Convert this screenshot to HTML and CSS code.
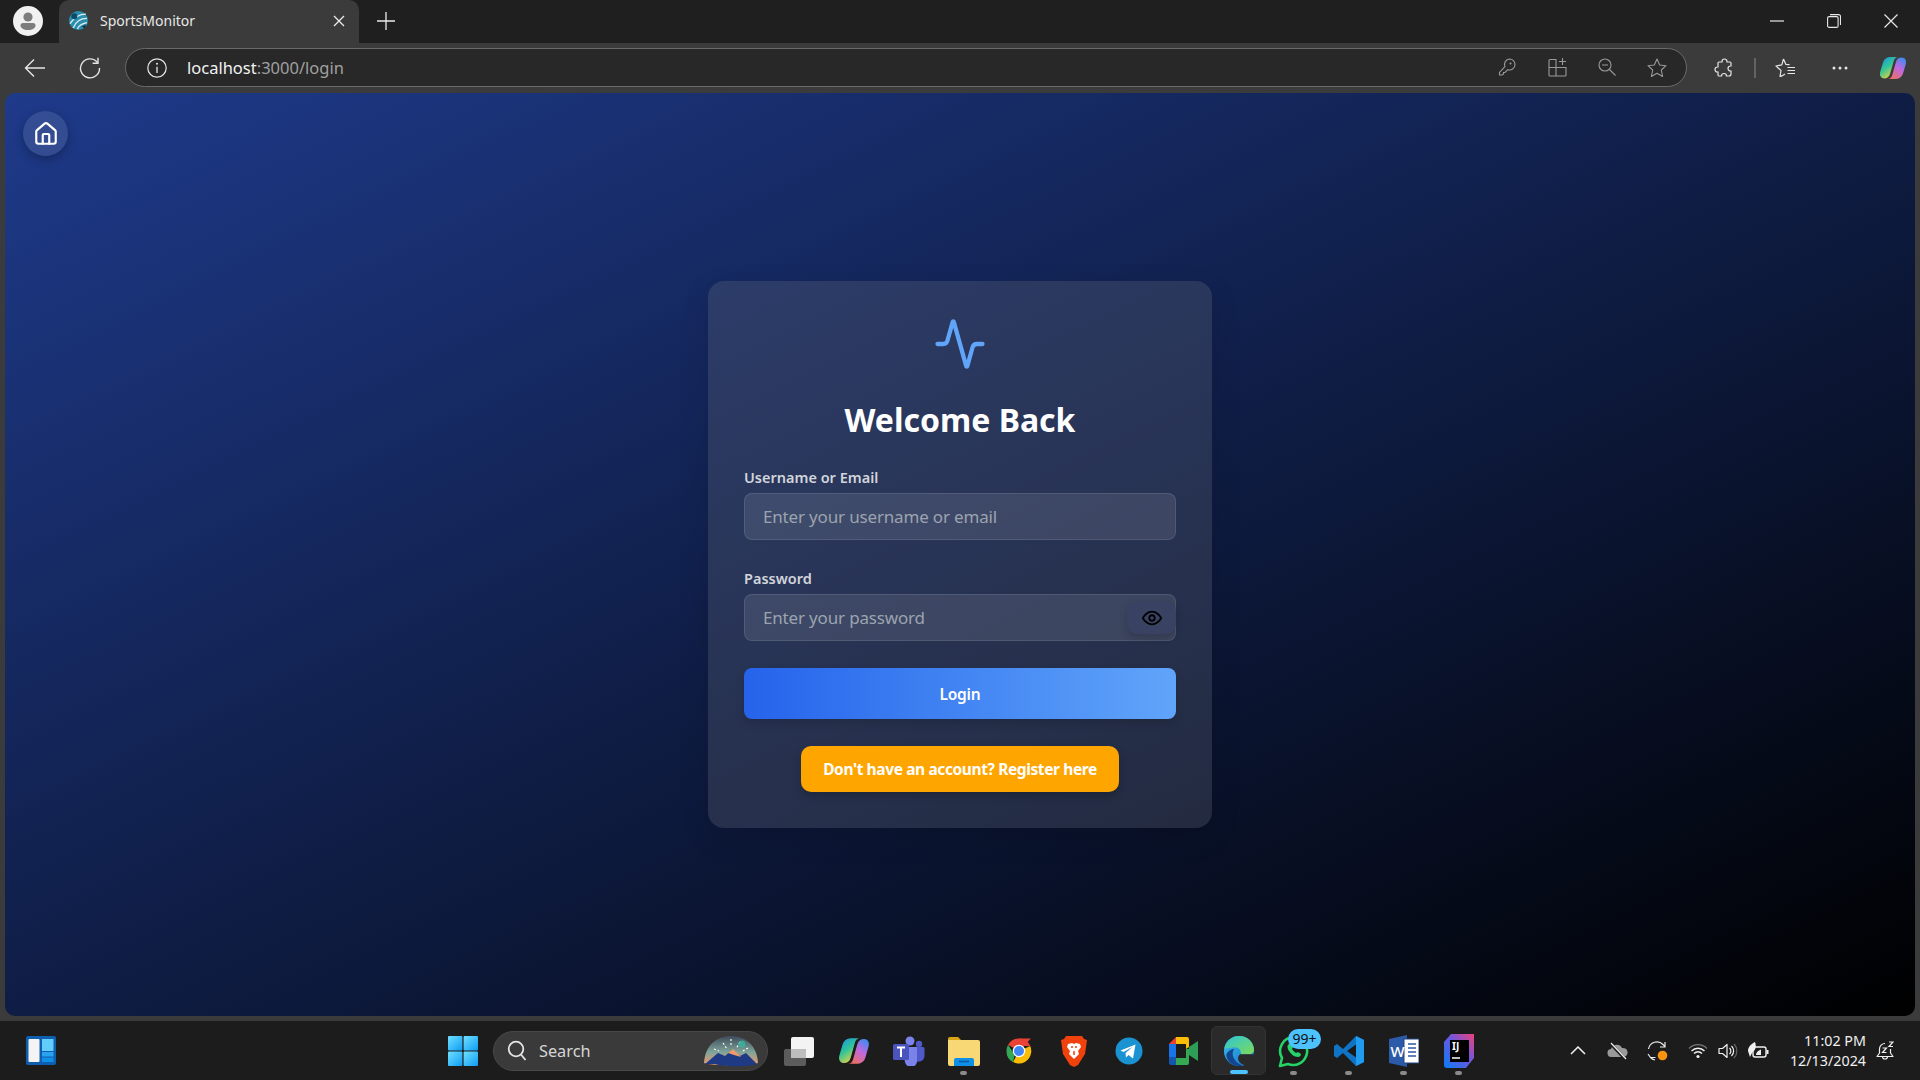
FILE: index.html
```html
<!DOCTYPE html>
<html lang="en">
<head>
	<meta charset="UTF-8">
	<title>SportsMonitor</title>
	<link rel="stylesheet" href="styles.css">
</head>
<body>
	<svg class="defs" width="0" height="0">
		<defs>
			<linearGradient id="cpA" x1="0" y1="0" x2="0.6" y2="1">
				<stop offset="0" stop-color="#1b8ee8"/><stop offset="0.5" stop-color="#2fc59a"/><stop offset="1" stop-color="#f2d23c"/>
			</linearGradient>
			<linearGradient id="cpB" x1="0.8" y1="0" x2="0.2" y2="1">
				<stop offset="0" stop-color="#3d8bf0"/><stop offset="0.45" stop-color="#c168e0"/><stop offset="1" stop-color="#f0705a"/>
			</linearGradient>
			<linearGradient id="winG" x1="0" y1="0" x2="1" y2="1">
				<stop offset="0" stop-color="#6fe0ff"/><stop offset="1" stop-color="#0f9cf5"/>
			</linearGradient>
			<linearGradient id="edgeG" x1="0" y1="0" x2="1" y2="1">
				<stop offset="0" stop-color="#35c1f1"/><stop offset="1" stop-color="#1b6fc4"/>
			</linearGradient>
			<linearGradient id="edgeT" x1="0" y1="0" x2="1" y2="1">
				<stop offset="0" stop-color="#2cc7d8"/><stop offset="1" stop-color="#7ed957"/>
			</linearGradient>
			<linearGradient id="ijG" x1="0" y1="1" x2="1" y2="0">
				<stop offset="0" stop-color="#0a7cf5"/><stop offset="0.55" stop-color="#6b57e0"/><stop offset="1" stop-color="#f0417a"/>
			</linearGradient>
			<linearGradient id="fireG" x1="0" y1="0" x2="0" y2="1">
				<stop offset="0" stop-color="#3d4a5a"/><stop offset="0.55" stop-color="#7fa49a"/><stop offset="1" stop-color="#ef9a6a"/>
			</linearGradient>
			<symbol id="copilot" viewBox="0 0 24 24">
				<path d="M10 2.500h6.500c-2 0-3.200 1.200-3.800 3.200L9.500 17c-.8 2.800-2.500 4-5 4-2.800 0-4.300-2.500-3.500-5.500L3.500 7C4.500 4 7 2.500 10 2.500z" fill="url(#cpA)"/>
				<path d="M14 21.500H7.500c2 0 3.200-1.200 3.800-3.200L14.500 7c.8-2.800 2.500-4 5-4 2.800 0 4.300 2.500 3.500 5.500L20.500 17c-1 3-3.500 4.500-6.500 4.500z" fill="url(#cpB)"/>
			</symbol>
		</defs>
	</svg>

	<div class="tabbar">
		<div class="profile">
			<svg width="30" height="30" viewBox="0 0 30 30"><circle cx="15" cy="15" r="15" fill="#f1f1f1"/><circle cx="15" cy="11" r="4.600" fill="#7d7d7d"/><path d="M7.500 19.500a2.500 2.500 0 0 1 2.500-2.500h10a2.500 2.500 0 0 1 2.500 2.500c0 2.600-3 4.500-7.500 4.500s-7.500-1.900-7.500-4.500z" fill="#7d7d7d"/></svg>
		</div>
		<div class="tab">
			<svg class="favicon" width="19" height="19" viewBox="0 0 18 18"><circle cx="9" cy="9" r="9" fill="#2a8fae"/><path d="M1 12C5 6 10 3 16 3M4 16c2-5 6-9 13-9M8 17c1-3 4-5 9-6" stroke="#dfeef2" stroke-width="1.300" fill="none"/><circle cx="5" cy="5" r="2.800" fill="#0c4a66"/><path d="M12 15l4-2-1 3z" fill="#123"/></svg>
			<span class="tab-title">SportsMonitor</span>
			<svg class="tab-close" width="12" height="12" viewBox="0 0 12 12"><path d="M1 1l10 10M11 1L1 11" stroke="#ececec" stroke-width="1.300"/></svg>
		</div>
		<svg class="newtab" width="18" height="18" viewBox="0 0 18 18"><path d="M9 0v18M0 9h18" stroke="#ececec" stroke-width="1.300"/></svg>
		<div class="winctl">
			<span class="winbtn"><svg width="14" height="14" viewBox="0 0 14 14"><path d="M0 7h14" stroke="#e8e8e8" stroke-width="1.200"/></svg></span>
			<span class="winbtn"><svg width="14" height="14" viewBox="0 0 14 14"><rect x="0.600" y="2.600" width="10.500" height="10.800" rx="1.500" fill="none" stroke="#e8e8e8" stroke-width="1.100"/><path d="M3 .6h8.500a2 2 0 0 1 2 2V11" fill="none" stroke="#e8e8e8" stroke-width="1.100"/></svg></span>
			<span class="winbtn"><svg width="14" height="14" viewBox="0 0 14 14"><path d="M.5.5l13 13M13.500.5l-13 13" stroke="#e8e8e8" stroke-width="1.200"/></svg></span>
		</div>
	</div>

	<div class="toolbar">
		<span class="navbtn">
			<svg width="22" height="20" viewBox="0 0 22 20"><path d="M21 10H1.500M10 1.500L1.500 10l8.500 8.500" fill="none" stroke="#e6e6e6" stroke-width="1.400"/></svg>
		</span>
		<span class="navbtn reload">
			<svg width="22" height="22" viewBox="0 0 22 22"><path d="M18.500 5.500A9.500 9.500 0 1 0 20.500 11" fill="none" stroke="#e6e6e6" stroke-width="1.400"/><path d="M19 .8v5.400h-5.400" fill="none" stroke="#e6e6e6" stroke-width="1.400"/></svg>
		</span>
		<div class="address">
			<svg class="info" width="20" height="20" viewBox="0 0 20 20"><circle cx="10" cy="10" r="9.200" fill="none" stroke="#e6e6e6" stroke-width="1.200"/><path d="M10 8.800V15" stroke="#e6e6e6" stroke-width="1.300"/><circle cx="10" cy="5.800" r="1" fill="#e6e6e6"/></svg>
			<span class="url"><span class="url-host">localhost</span>:3000/login</span>
			<div class="addr-icons">
				<span class="addr-icon"><svg width="18" height="18" viewBox="0 0 18 18"><path d="M11.500 1a5.500 5.500 0 0 1 5.500 5.500 5.500 5.500 0 0 1-7.300 5.200L7 14.500H5.500V16L4 17H1.500v-2.500l5.400-5.900A5.500 5.500 0 0 1 11.500 1z" fill="none" stroke="#9a9a9a" stroke-width="1.100"/><circle cx="12.500" cy="5.500" r="1" fill="#9a9a9a"/></svg></span>
				<span class="addr-icon"><svg width="19" height="19" viewBox="0 0 19 19"><path d="M8 1.500H2a1 1 0 0 0-1 1V9.500h7zM1 9.500V17a1 1 0 0 0 1 1h6V9.500zM8 18h9a1 1 0 0 0 1-1V9.500H8zM14.500 0v7M11 3.500h7" fill="none" stroke="#9a9a9a" stroke-width="1.100"/></svg></span>
				<span class="addr-icon"><svg width="18" height="18" viewBox="0 0 18 18"><circle cx="7" cy="7" r="6" fill="none" stroke="#9a9a9a" stroke-width="1.100"/><path d="M4 7h6M11.500 11.500l6 6" stroke="#9a9a9a" stroke-width="1.100"/></svg></span>
				<span class="addr-icon"><svg width="20" height="20" viewBox="0 0 20 20"><path d="M10 1l2.700 6 6.300.7-4.700 4.300 1.300 6.500L10 15.200l-5.600 3.300L5.700 12 1 7.700 7.300 7z" fill="none" stroke="#9a9a9a" stroke-width="1.100" stroke-linejoin="round"/></svg></span>
			</div>
		</div>
		<span class="tool puzzle"><svg width="20" height="20" viewBox="0 0 20 20"><path d="M8 3.500a2.500 2.500 0 0 1 5 0V4h3a1 1 0 0 1 1 1v3h-.5a2.500 2.500 0 0 0 0 5h.5v3a2 2 0 0 1-2 2h-2.500a2.500 2.500 0 0 0-5 0H5a1 1 0 0 1-1-1v-3h-.5a2.500 2.500 0 0 1 0-5H4V5a1 1 0 0 1 1-1h3z" fill="none" stroke="#e6e6e6" stroke-width="1.200"/></svg></span>
		<span class="divider"></span>
		<span class="tool fav"><svg width="20" height="20" viewBox="0 0 20 20"><path d="M8.500 1l2.300 5.300 3.700.4M6.500 17.500l-1.500 1L6 12.500 1 8l5.800-1.200L8.500 1M6 18.500l4-2.500" fill="none" stroke="#e6e6e6" stroke-width="1.200" stroke-linejoin="round"/><path d="M12.500 9.500H20M12.500 12.500H20M12.500 15.500H20" stroke="#e6e6e6" stroke-width="1.200"/></svg></span>
		<span class="tool more"><svg width="16" height="4" viewBox="0 0 16 4"><circle cx="2" cy="2" r="1.500" fill="#e6e6e6"/><circle cx="8" cy="2" r="1.500" fill="#e6e6e6"/><circle cx="14" cy="2" r="1.500" fill="#e6e6e6"/></svg></span>
		<span class="tool cop"><svg width="28" height="28"><use href="#copilot"/></svg></span>
	</div>

	<div class="viewport">
		<main class="page">
			<a class="home-btn" href="#home">
				<svg width="26" height="26" viewBox="0 0 24 24" fill="none" stroke="#fff" stroke-width="2" stroke-linecap="round" stroke-linejoin="round"><path d="M15 21v-8a1 1 0 0 0-1-1h-4a1 1 0 0 0-1 1v8"/><path d="M3 10a2 2 0 0 1 .709-1.528l7-5.999a2 2 0 0 1 2.582 0l7 5.999A2 2 0 0 1 21 10v9a2 2 0 0 1-2 2H5a2 2 0 0 1-2-2z"/></svg>
			</a>
			<form class="card">
				<svg class="logo" width="54" height="54" viewBox="0 0 24 24" fill="none" stroke="#60a5fa" stroke-width="1.900" stroke-linecap="round" stroke-linejoin="round"><path d="M22 12h-2.480a2 2 0 0 0-1.930 1.460l-2.350 8.360a.25.25 0 0 1-.48 0L9.240 2.180a.25.25 0 0 0-.48 0l-2.350 8.360A2 2 0 0 1 4.490 12H2"/></svg>
				<h1 class="title">Welcome Back</h1>
				<div class="field">
					<label class="label">Username or Email</label>
					<input class="input" type="text" placeholder="Enter your username or email">
				</div>
				<div class="field field-last">
					<label class="label">Password</label>
					<div class="pass-wrap">
						<input class="input" type="password" placeholder="Enter your password">
						<span class="eye">
							<svg width="22" height="22" viewBox="0 0 24 24" fill="none" stroke="#000" stroke-width="2" stroke-linecap="round" stroke-linejoin="round"><path d="M2 12s3.500-7 10-7 10 7 10 7-3.500 7-10 7-10-7-10-7z"/><circle cx="12" cy="12" r="3"/></svg>
						</span>
					</div>
				</div>
				<button class="login" type="button">Login</button>
				<button class="register" type="button">Don't have an account? Register here</button>
			</form>
		</main>
	</div>

	<div class="taskbar">
		<div class="tb-left">
			<svg width="30" height="30" viewBox="0 0 30 30"><rect width="30" height="29" rx="2" fill="#0f5fb0"/><rect x="2.500" y="3" width="11" height="23" rx="1" fill="#f4f4f4"/><rect x="16" y="3" width="11.500" height="12" fill="#62cdfb"/><rect x="16" y="16" width="11.500" height="4.500" fill="#2aa3ee"/><rect x="16" y="21.500" width="11.500" height="4.500" fill="#0f8fe6"/></svg>
		</div>
		<div class="tb-item">
			<svg width="30" height="30" viewBox="0 0 30 30"><rect x="0" y="0" width="14.400" height="14.400" rx="1" fill="url(#winG)"/><rect x="15.600" y="0" width="14.400" height="14.400" rx="1" fill="url(#winG)"/><rect x="0" y="15.600" width="14.400" height="14.400" rx="1" fill="url(#winG)"/><rect x="15.600" y="15.600" width="14.400" height="14.400" rx="1" fill="url(#winG)"/></svg>
		</div>
		<div class="search">
			<svg width="20" height="22" viewBox="0 0 20 22"><circle cx="9" cy="9" r="7.300" fill="none" stroke="#e4e4e4" stroke-width="1.800"/><path d="M14 14.500l4.500 5.500" stroke="#e4e4e4" stroke-width="1.800"/></svg>
			<span class="search-text">Search</span>
			<svg class="search-art" width="56" height="32" viewBox="0 0 56 32"><path d="M1 28C2 10 14 1 28 1s26 9 27 27c-6 3-48 3-54 0z" fill="url(#fireG)"/><path d="M2 29l13-11 7 3 7-6 8 6 6-3 11 11c-8 3-34 3-42 0z" fill="#1f3a85"/><path d="M25 18l5-4 8 8-7-2z" fill="#ef9a6a"/><path d="M28 4v8M20 8l4 6M37 7l-4 7M11 14l5 2M45 13l-5 3" stroke="#fff" stroke-width="1.200" stroke-dasharray="2 2"/><circle cx="39" cy="9" r="3.500" fill="#35b8a0" opacity="0.800"/></svg>
		</div>
		<div class="tb-item">
			<svg width="32" height="30" viewBox="0 0 32 30"><rect x="1" y="13" width="22" height="17" rx="2" fill="#5c5c5c"/><rect x="8" y="1" width="23" height="21" rx="2" fill="#f3f3f3"/><rect x="8" y="13" width="15" height="9" fill="#bdbdbd"/></svg>
		</div>
		<div class="tb-item"><svg width="32" height="32"><use href="#copilot"/></svg></div>
		<div class="tb-item">
			<svg width="32" height="30" viewBox="0 0 32 30"><circle cx="17" cy="5" r="4.500" fill="#7b83eb"/><circle cx="26" cy="8" r="3.200" fill="#5059c9"/><path d="M20 11h10a1.500 1.500 0 0 1 1.500 1.500V20a6 6 0 0 1-9 5z" fill="#5059c9"/><path d="M9 11h15v13a6 6 0 0 1-12 2z" fill="#7b83eb"/><rect x="0" y="8" width="16" height="16" rx="1.500" fill="#4b53bc"/><path d="M4 11.500h8M8 11.500V21" stroke="#fff" stroke-width="2"/></svg>
		</div>
		<div class="tb-item has-dot">
			<svg width="32" height="30" viewBox="0 0 32 30"><path d="M0 3a2 2 0 0 1 2-2h8l3 3h-13z" fill="#d9a514"/><path d="M0 4h13l3 0h14a2 2 0 0 1 2 2v22a2 2 0 0 1-2 2H2a2 2 0 0 1-2-2z" fill="#f8d775"/><path d="M6 30v-6a2 2 0 0 1 2-2h16a2 2 0 0 1 2 2v6z" fill="#0f8fe6"/><path d="M11 25.500h10" stroke="#0a5ba8" stroke-width="1.600"/></svg>
		</div>
		<div class="tb-item">
			<svg width="30" height="30" viewBox="0 0 48 48"><path d="M24 24L6.500 14A20 20 0 0 1 24 4h18a20 20 0 0 1 1 0z" fill="#ea4335"/><path d="M4 24A20 20 0 0 1 6.500 14L17 30l-2.500 12A20 20 0 0 1 4 24z" fill="#34a853"/><path d="M24 44a20 20 0 0 1-9.500-2.300L24 24l18-8a20 20 0 0 1-18 28z" fill="#fbbc05"/><path d="M24 4a20 20 0 0 1 18 12H24z" fill="#ea4335"/><circle cx="24" cy="24" r="10" fill="#fff"/><circle cx="24" cy="24" r="8" fill="#4285f4"/></svg>
		</div>
		<div class="tb-item">
			<svg width="26" height="32" viewBox="0 0 26 32"><path d="M5 1h16l2 3 3 1-2 14-7 11-4 2-4-2L2 19 0 5l3-1z" fill="#f1420e"/><path d="M7 9l4-1 2 1 2-1 4 1 1 3-3 4 1 3-5 5-5-5 1-3-3-4z" fill="#fff"/><path d="M10 12h2M14 12h2M13 16v4" stroke="#f1420e" stroke-width="1.500"/></svg>
		</div>
		<div class="tb-item">
			<svg width="28" height="28" viewBox="0 0 28 28"><circle cx="14" cy="14" r="13.500" fill="#1b92d1"/><path d="M5.500 13.500l15-6-2.500 14-4.500-3.500-2.500 2.500-.5-4.500 7-6-9 5z" fill="#fff"/></svg>
		</div>
		<div class="tb-item">
			<svg width="30" height="28" viewBox="0 0 30 28"><path d="M7 0h10v7H7z" fill="#fbbc04"/><path d="M0 7l7-7v7z" fill="#ea4335"/><path d="M0 7h7v13H0z" fill="#1a73e8"/><path d="M0 20h7v8H2a2 2 0 0 1-2-2z" fill="#1557b0"/><path d="M7 21h10v7H7z" fill="#34a853"/><path d="M17 0h1a2 2 0 0 1 2 2v8l-3 2z" fill="#fbbc04"/><path d="M17 12l3 0v14a2 2 0 0 1-2 2h-1z" fill="#34a853"/><path d="M20 10l9-6v20l-9-6z" fill="#2e9d57"/></svg>
		</div>
		<div class="tb-item tb-active">
			<svg width="32" height="32" viewBox="0 0 32 34"><circle cx="16" cy="17" r="16" fill="url(#edgeG)"/><path d="M.5 14C2.500 6 9 1 16 1c9 0 16 6.500 16 15 0 3-3 4.500-6 4.500h-8c.5-4-2-7.500-7-7.500-4 0-7 2-10.500 1z" fill="url(#edgeT)"/><path d="M18 20.500h14c-1 6-4.500 10-8.500 11.500-4.500 0-8.500-3-8.500-7.500 0-2 1.500-4 3-4z" fill="#2a2a2a"/><path d="M11 15c-4 5-1 14 9 17.500C11 35 3 29 2.500 21c1.500-3.500 5-6 8.500-6z" fill="#14458f"/></svg>
		</div>
		<div class="tb-item has-dot wa">
			<svg width="32" height="34" viewBox="0 0 32 34"><path d="M16 3a14 14 0 0 0-12 21L2 32l8-2a14 14 0 1 0 6-27z" fill="none" stroke="#25d366" stroke-width="2.600" stroke-linejoin="round"/><path d="M11 10c-2 1-2 4 0 7s5 6 9 6c2 0 3-2 3-3l-3-2-2 1c-2-1-3-3-4-4l1-2-2-3z" fill="#25d366"/></svg>
			<span class="badge">99+</span>
		</div>
		<div class="tb-item has-dot">
			<svg width="32" height="32" viewBox="0 0 32 32"><path d="M23 1l8 4v22l-8 4-13-13-6 5-3-2v-10l3-2 6 5z" fill="#0f74c5"/><path d="M23 9.500L14 16l9 6.500z" fill="#1a1a1a"/><path d="M23 1l8 4v22l-8 4z" fill="#1f9cf0"/></svg>
		</div>
		<div class="tb-item has-dot">
			<svg width="30" height="32" viewBox="0 0 30 32"><path d="M0 4l18-4v32L0 28z" fill="#2b5aa8"/><rect x="15" y="4" width="15" height="24" fill="#fff" stroke="#1f4585"/><path d="M19 9h8M19 13h8M19 17h8M19 21h8" stroke="#2b5aa8" stroke-width="1.500"/><text x="1.500" y="22" class="word-w">W</text></svg>
		</div>
		<div class="tb-item has-dot">
			<svg width="30" height="34" viewBox="0 0 30 34"><path d="M7 0h23v24l-8 10H3a3 3 0 0 1-3-3V8z" fill="url(#ijG)"/><rect x="6" y="6" width="19" height="22" fill="#000"/><text x="8" y="16" class="ij-text">IJ</text><path d="M8 24h8" stroke="#fff" stroke-width="1.500"/></svg>
		</div>
		<div class="tray">
			<span class="tray-icon wide"><svg width="16" height="9" viewBox="0 0 16 9"><path d="M1 8l7-7 7 7" fill="none" stroke="#f0f0f0" stroke-width="1.500"/></svg></span>
			<span class="tray-icon wide"><svg width="22" height="18" viewBox="0 0 22 18"><path d="M5 15a4 4 0 0 1-1-8 6 6 0 0 1 11-1 4.500 4.500 0 0 1 2 9z" fill="#9a9a9a"/><path d="M3 1l15 16" stroke="#1c1c1c" stroke-width="3"/><path d="M4 1l15 16" stroke="#ededed" stroke-width="1.200"/></svg></span>
			<span class="tray-icon wide"><svg width="22" height="22" viewBox="0 0 22 22"><path d="M1.500 9A8.500 8.500 0 0 1 16 4.500L18 7M18 2v5h-5M1 14l2.500 3.500h5M3.500 17.500A8 8 0 0 0 8 20" fill="none" stroke="#ededed" stroke-width="1.200"/><circle cx="15.500" cy="15.500" r="4.800" fill="#f7930e"/></svg></span>
			<span class="tray-icon"><svg width="20" height="16" viewBox="0 0 20 16"><path d="M1 5.500a12.500 12.500 0 0 1 18 0" fill="none" stroke="#777" stroke-width="1.300"/><path d="M3.500 8a9 9 0 0 1 13 0M6 10.500a5.500 5.500 0 0 1 8 0" fill="none" stroke="#f0f0f0" stroke-width="1.400"/><circle cx="10" cy="13.500" r="1.600" fill="#f0f0f0"/></svg></span>
			<span class="tray-icon"><svg width="20" height="18" viewBox="0 0 20 18"><path d="M1 6.500h3.500L9 2.500v13l-4.500-4H1z" fill="none" stroke="#f0f0f0" stroke-width="1.200" stroke-linejoin="round"/><path d="M11.500 6a4 4 0 0 1 0 6M13.500 4a7 7 0 0 1 0 10" fill="none" stroke="#f0f0f0" stroke-width="1.200"/><path d="M16 2a10 10 0 0 1 0 14" fill="none" stroke="#666" stroke-width="1.200"/></svg></span>
			<span class="tray-icon"><svg width="22" height="18" viewBox="0 0 22 18"><rect x="6" y="5" width="13" height="10" rx="2" fill="none" stroke="#f0f0f0" stroke-width="1.400"/><rect x="19.500" y="8" width="2" height="4" fill="#f0f0f0"/><path d="M1 9C1 5 4 2 8 0c1.500 4 1 8-2.500 10L3 15z" fill="#f0f0f0"/><path d="M9 13c0-2.500 2-4.500 5-5.500V13z" fill="#f0f0f0"/></svg></span>
			<div class="clock">
				<span>11:02 PM</span>
				<span>12/13/2024</span>
			</div>
			<svg class="bell" width="18" height="20" viewBox="0 0 18 20"><path d="M9 2.500a5.500 5.500 0 0 0-5.500 5.500v4L1 15.500h16L14.500 12V8" fill="none" stroke="#f0f0f0" stroke-width="1.200" stroke-linejoin="round"/><path d="M6.500 15.500a2.500 2.500 0 0 0 5 0" fill="none" stroke="#f0f0f0" stroke-width="1.200"/><path d="M6.500 7h4l-4 4.500h4M13 1h4l-4 4.500h4" fill="none" stroke="#f0f0f0" stroke-width="1.200"/></svg>
		</div>
	</div>
</body>
</html>
```

FILE: styles.css
```css
*{
	margin: 0;
	padding: 0;
	box-sizing: border-box;
}
html,body{
	height: 100%;
}
body{
	width: 1920px;
	height: 1080px;
	overflow: hidden;
	display: flex;
	flex-direction: column;
	background: #3b3b3b;
	font-family: "Noto Sans", "Open Sans", sans-serif;
}
svg{
	display: block;
	flex-shrink: 0;
}
.defs{
	height: 0;
}

/* browser tabs */
.tabbar{
	height: 43px;
	display: flex;
	align-items: center;
	padding: 0 0 2px 13px;
	background: #1f1f1f;
}
.profile{
	width: 30px;
	margin-right: 16px;
}
.tab{
	width: 300px;
	height: 43px;
	margin-bottom: -2px;
	display: flex;
	align-items: center;
	padding: 0 14px 2px 10px;
	background: #3b3b3b;
	border-radius: 10px 10px 0 0;
}
.tab-title{
	margin-left: 12px;
	color: #e8e8e8;
	font-size: 14px;
}
.tab-close{
	margin-left: auto;
}
.newtab{
	margin-left: 18px;
}
.winctl{
	margin-left: auto;
	display: flex;
	padding-right: 1px;
}
.winbtn{
	width: 57px;
	display: flex;
	justify-content: center;
}

/* browser toolbar */
.toolbar{
	height: 50px;
	display: flex;
	align-items: center;
	padding: 0 7px 1px 10px;
	background: #3b3b3b;
}
.navbtn{
	width: 50px;
	display: flex;
	justify-content: center;
}
.reload{
	margin-left: 5px;
}
.address{
	width: 1562px;
	height: 39px;
	margin-left: 10px;
	display: flex;
	align-items: center;
	padding: 0 4px 0 21px;
	background: #282828;
	border: 1px solid #6a6a6a;
	border-radius: 20px;
}
.url{
	margin-left: 20px;
	color: #a0a0a0;
	font-size: 16.500px;
}
.url-host{
	color: #f2f2f2;
}
.addr-icons{
	margin-left: auto;
	display: flex;
}
.addr-icon{
	width: 50px;
	display: flex;
	justify-content: center;
}
.tool{
	width: 40px;
	display: flex;
	justify-content: center;
}
.puzzle{
	margin-left: 17px;
}
.divider{
	width: 2px;
	height: 20px;
	margin-left: 10px;
	background: #626262;
}
.fav{
	margin-left: 9px;
}
.more{
	margin-left: 15px;
}
.cop{
	margin-left: 13px;
}

/* page */
.viewport{
	height: 928px;
	padding: 0 5px 5px;
}
.page{
	position: relative;
	height: 923px;
	display: flex;
	align-items: center;
	justify-content: center;
	border-radius: 10px;
	background: linear-gradient(to bottom right, #1e3a8a, #000);
}
.home-btn{
	position: absolute;
	left: 18px;
	top: 18px;
	width: 45px;
	height: 45px;
	display: flex;
	align-items: center;
	justify-content: center;
	border-radius: 50%;
	background: rgba(255,255,255,0.1);
	box-shadow: 0 4px 10px rgba(0,0,0,0.25);
}
.card{
	width: 504px;
	padding: 36px;
	display: flex;
	flex-direction: column;
	border-radius: 16px;
	background: rgba(100,107,123,0.3);
	box-shadow: 0 10px 30px rgba(0,0,0,0.12);
}
.logo{
	align-self: center;
}
.title{
	margin: 27px 0 25px;
	color: #fff;
	font-size: 32px;
	font-weight: 700;
	line-height: 44px;
	text-align: center;
}
.field{
	margin-bottom: 28px;
}
.field-last{
	margin-bottom: 27px;
}
.label{
	display: block;
	margin-bottom: 6px;
	color: #d1d5db;
	font-size: 14.500px;
	font-weight: 600;
	line-height: 20px;
}
.input{
	width: 100%;
	height: 47px;
	padding: 0 18px;
	color: #fff;
	font-family: inherit;
	font-size: 17px;
	letter-spacing: -0.170px;
	background: rgba(255,255,255,0.1);
	border: 1px solid rgba(255,255,255,0.1);
	border-radius: 8px;
	outline: none;
}
.input::placeholder{
	color: #9ca3af;
}
.pass-wrap{
	position: relative;
}
.eye{
	position: absolute;
	top: 7px;
	right: 0;
	width: 49px;
	height: 33px;
	display: flex;
	align-items: center;
	justify-content: center;
	border-radius: 10px;
	background: #3a4263;
	box-shadow: 0 3px 8px rgba(0,0,0,0.18);
}
.login{
	height: 51px;
	color: #fff;
	font-family: inherit;
	font-size: 15.500px;
	font-weight: 600;
	letter-spacing: -0.200px;
	background: linear-gradient(to right, #2563eb, #60a5fa);
	border: none;
	border-radius: 8px;
	box-shadow: 0 4px 8px rgba(0,0,0,0.15);
}
.register{
	align-self: center;
	width: 318px;
	height: 46px;
	margin-top: 27px;
	color: #fff;
	font-family: inherit;
	font-size: 15.500px;
	font-weight: 700;
	letter-spacing: -0.390px;
	background: #ffa500;
	border: none;
	border-radius: 10px;
	box-shadow: 0 4px 8px rgba(0,0,0,0.2);
}

/* windows taskbar */
.taskbar{
	flex: 1;
	display: flex;
	align-items: center;
	background: #1c1c1c;
}
.tb-left{
	width: 435px;
	padding-left: 26px;
}
.tb-item{
	position: relative;
	width: 55px;
	height: 49px;
	display: flex;
	align-items: center;
	justify-content: center;
}
.tb-active{
	background: #2a2a2a;
	border: 1px solid #333;
	border-radius: 6px;
}
.tb-active::after,
.has-dot::after{
	content: "";
	position: absolute;
	left: 50%;
	bottom: 0;
	width: 7px;
	height: 4px;
	margin-left: -3.500px;
	border-radius: 2px;
	background: #8a8a8a;
}
.tb-active::after{
	width: 18px;
	margin-left: -9px;
	background: #4cc2ff;
}
.badge{
	position: absolute;
	left: 22px;
	top: 3px;
	width: 33px;
	height: 20px;
	color: #111;
	font-size: 14px;
	line-height: 20px;
	text-align: center;
	border-radius: 10px;
	background: #4cc2ff;
}
.search{
	width: 275px;
	height: 40px;
	margin: 0 3px;
	display: flex;
	align-items: center;
	padding: 0 8px 0 13px;
	background: #3a3a3a;
	border: 1px solid #484848;
	border-radius: 20px;
}
.search-text{
	margin-left: 12px;
	color: #d6d6d6;
	font-size: 16.300px;
}
.search-art{
	margin-left: auto;
}
.word-w{
	fill: #fff;
	font-family: "Noto Sans", sans-serif;
	font-size: 15px;
	font-weight: 500;
}
.ij-text{
	fill: #fff;
	font-family: "Noto Sans", sans-serif;
	font-size: 10px;
	font-weight: 700;
}
.tray{
	display: flex;
	align-items: center;
	margin-left: 72px;
}
.tray-icon{
	width: 30px;
	display: flex;
	justify-content: center;
}
.wide{
	width: 40px;
}
.wide:nth-child(3){
	margin-right: 5px;
}
.clock{
	width: 93px;
	display: flex;
	flex-direction: column;
	align-items: flex-end;
	color: #f0f0f0;
	font-size: 14.300px;
	line-height: 20px;
}
.bell{
	margin-left: 10px;
}
```
